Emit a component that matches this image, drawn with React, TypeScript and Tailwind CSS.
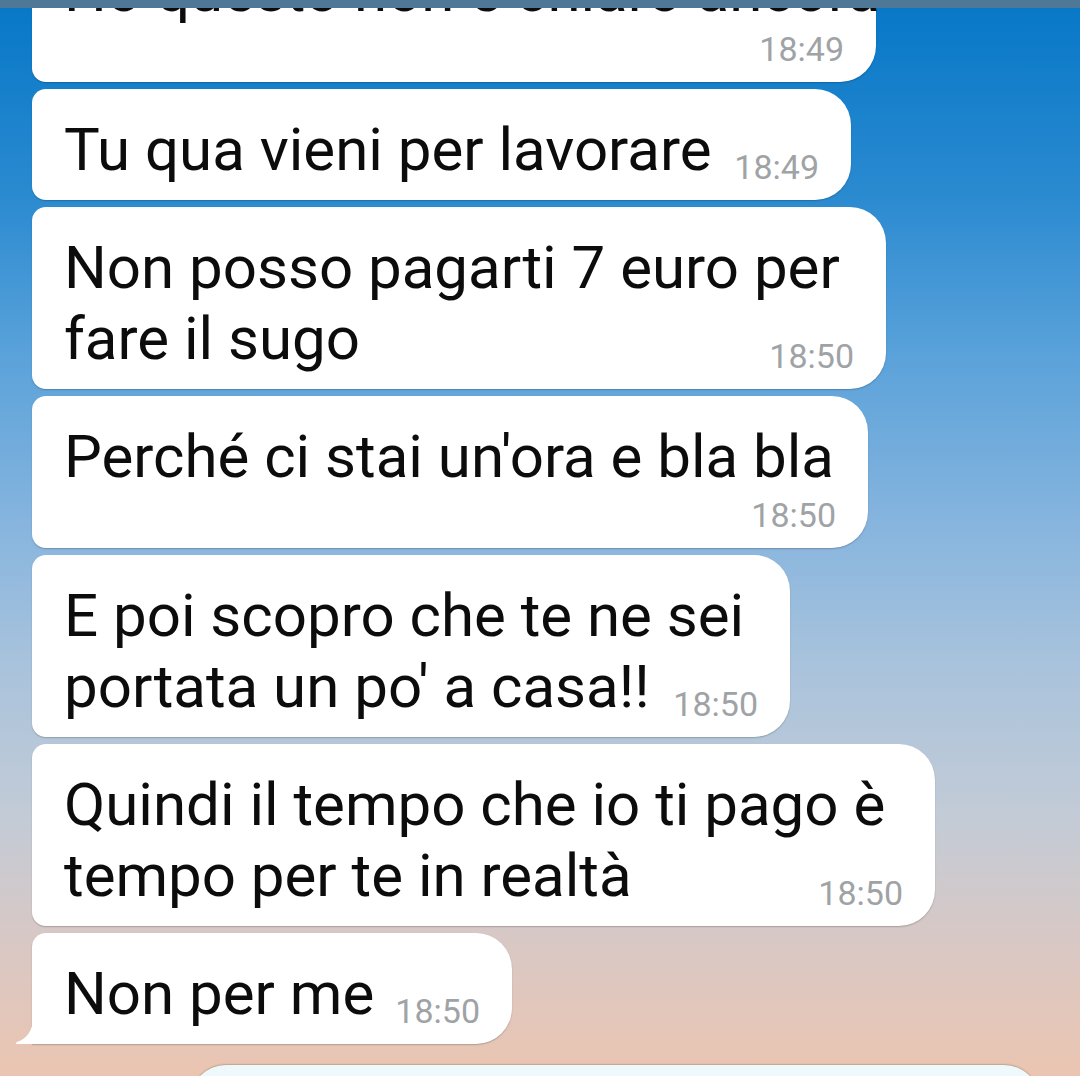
import React from "react";

type Msg = {
	lines: string[];
	time: string;
	mode: "inline" | "below";
	width: string;
	tail?: boolean;
};

const messages: Msg[] = [
	{ lines: ["Ho questo non è chiaro ancora"], time: "18:49", mode: "below", width: "w-[844px]" },
	{ lines: ["Tu qua vieni per lavorare"], time: "18:49", mode: "inline", width: "w-[819px]" },
	{ lines: ["Non posso pagarti 7 euro per", "fare il sugo"], time: "18:50", mode: "inline", width: "w-[854px]" },
	{ lines: ["Perché ci stai un'ora e bla bla"], time: "18:50", mode: "below", width: "w-[836px]" },
	{ lines: ["E poi scopro che te ne sei", "portata un po' a casa!!"], time: "18:50", mode: "inline", width: "w-[758px]" },
	{ lines: ["Quindi il tempo che io ti pago è", "tempo per te in realtà"], time: "18:50", mode: "inline", width: "w-[903px]" },
	{ lines: ["Non per me"], time: "18:50", mode: "inline", width: "w-[480px]", tail: true },
];

function Time({ value }: { value: string }) {
	return <span className="shrink-0 text-[34px] leading-[36px] text-[#a0a3a6]">{value}</span>;
}

function Tail() {
	return (
		<svg className="absolute bottom-0 left-[-17px] h-[26px] w-[18px]" viewBox="0 0 18 26" aria-hidden="true">
			<path d="M18 0 C18 12 12 21 1.5 24.2 C0.4 24.6 0.6 26 1.8 26 L18 26 Z" fill="#ffffff" />
		</svg>
	);
}

function Bubble({ msg }: { msg: Msg }) {
	const head = msg.lines.slice(0, -1);
	const last = msg.lines[msg.lines.length - 1];
	return (
		<div
			className={`relative ${msg.width} ml-8 bg-white px-8 pt-[25px] pb-[15px] text-[60px] leading-[71px] text-[#0c0c0c] shadow-[0_1px_1.5px_rgba(0,0,0,0.22)] ${
				msg.tail ? "rounded-tl-[14px] rounded-tr-[36px] rounded-br-[36px] rounded-bl-none" : "rounded-l-[14px] rounded-r-[36px]"
			}`}
		>
			{head.map((l) => (
				<div key={l} className="whitespace-nowrap">{l}</div>
			))}
			{msg.mode === "inline" ? (
				<div className="flex items-end justify-between">
					<span className="whitespace-nowrap">{last}</span>
					<Time value={msg.time} />
				</div>
			) : (
				<>
					<div className="whitespace-nowrap">{last}</div>
					<div className="mt-[5px] flex justify-end">
						<Time value={msg.time} />
					</div>
				</>
			)}
			{msg.tail && <Tail />}
		</div>
	);
}

export default function App() {
	return (
		<div
			className="relative h-[1076px] w-[1080px] overflow-hidden bg-[linear-gradient(180deg,#0677c7_0%,#2a8ad0_18%,#5aa2da_33%,#8ab6de_50%,#a9c3dc_62%,#c3cbd6_76%,#d9c8c4_88%,#ebc5b1_100%)]"
			style={{ fontFamily: "Roboto, 'Noto Sans', sans-serif" }}
		>
			<div className="-mt-[70px] flex flex-col gap-[7px]">
				{messages.map((m, i) => (
					<Bubble key={i} msg={m} />
				))}
				<div className="mt-[14px] ml-[190px] h-[120px] w-[850px] rounded-[36px] bg-[#eef9fc] shadow-[0_-1px_1.5px_rgba(0,0,0,0.18)]" />
			</div>
			<div className="absolute top-0 left-0 h-[8px] w-full bg-[#4f7896]" />
		</div>
	);
}
